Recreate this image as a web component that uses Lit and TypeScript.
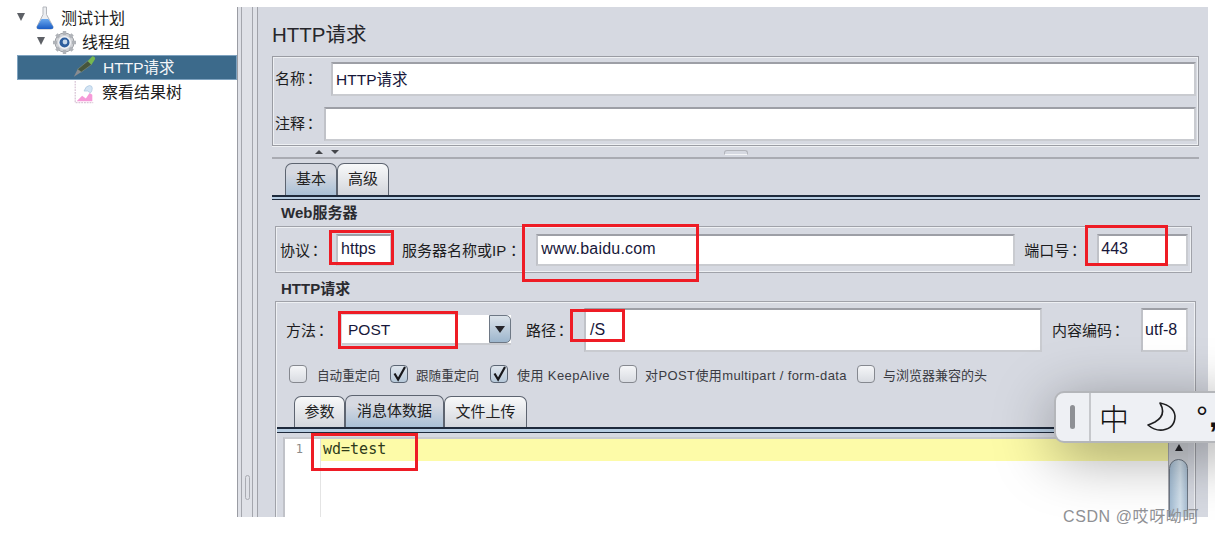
import { LitElement, html, css, svg } from "lit";
import { customElement } from "lit/decorators.js";

const flask = svg`<svg width="20" height="24" viewBox="0 0 20 24"><defs><linearGradient id="fl" x1="0" y1="0" x2="0" y2="1"><stop offset="0" stop-color="#6aa8ee"/><stop offset="1" stop-color="#1a5cc4"/></linearGradient></defs><path d="M8 1h3.5v7.5l6.5 12q.8 2.5-2 2.500H4q-2.800 0-2-2.500l6-12z" fill="#eceef1" stroke="#b4b7bd"/><path d="M6.500 13h6.800l4.700 7.500q.8 2.500-2 2.500H4q-2.800 0-2-2.500z" fill="url(#fl)"/></svg>`;
const gear = svg`<svg width="25" height="25" viewBox="0 0 25 25"><circle cx="12.500" cy="12.500" r="9.500" fill="#d0d2d6" stroke="#9a9da2" stroke-width="1"/><path d="M12.500 1v4M12.500 20v4M1 12.500h4M20 12.500h4M4.400 4.400l2.800 2.800M17.800 17.800l2.800 2.800M20.600 4.400l-2.800 2.800M7.200 17.800l-2.800 2.800" stroke="#b0b3b8" stroke-width="3.400"/><circle cx="12.500" cy="12.500" r="6.500" fill="#f3f4f6"/><circle cx="12.500" cy="12.500" r="5" fill="#2f5f9e"/><circle cx="13" cy="12" r="2.400" fill="#c7d8ea"/></svg>`;
const dropper = svg`<svg width="24" height="23" viewBox="0 0 26 24"><path d="M1 23l4-8 4 3z" fill="#8a8c90"/><path d="M5 15L16 6l4 4L9 18z" fill="#46553c" stroke="#8a947f" stroke-width=".6"/><path d="M16 6l5-5q3 0 3 3l-4 6z" fill="#76b850"/></svg>`;
const chart = svg`<svg width="22" height="24" viewBox="0 0 22 26"><path d="M1.500 1v23.500H21" fill="none" stroke="#d9c6d6" stroke-width="1.400" stroke-dasharray="2 1"/><path d="M3 23l6-6 4 3 4-6 3 2v7z" fill="#f59ad8"/><path d="M11 12q2-6 6-6 3 0 3 3t-2 5l-3-2z" fill="#d3e4f4" stroke="#9dbbd7" stroke-width=".6"/></svg>`;
const check = svg`<svg width="18" height="18" viewBox="0 0 18 18"><path d="M4.500 8.500l3.600 6L15 2" fill="none" stroke="#17171b" stroke-width="2.200"/></svg>`;
const moon = svg`<svg width="30" height="32" viewBox="0 0 30 32"><path d="M13 2Q20 14 8 21Q4 23 1 24Q8 30 16 29Q28 27 28 15Q27 5 13 2z" fill="none" stroke="#1d1d1f" stroke-width="1.600" stroke-linejoin="round"/></svg>`;
const colon = html`<span class="c">：</span>`;

@customElement("app-root")
export class AppRoot extends LitElement {
  static styles = css`
    :host { display: block; width: 1215px; height: 535px; position: relative; overflow: hidden; background: #fff; font-family: "Liberation Sans", "Noto Sans CJK SC", sans-serif; color: #1c1c20; }
    .page { display: flex; height: 517px; }
    .tree { width: 237px; padding-top: 5px; box-sizing: border-box; font-size: 16px; flex: none; }
    .node { height: 25px; padding-bottom: 2px; display: flex; align-items: center; box-sizing: border-box; }
    .node svg { flex: none; margin-top: 2px; }
    .tw { width: 0; height: 0; border-left: 4px solid transparent; border-right: 4px solid transparent; border-top: 8px solid #5d6066; }
    .n1 { padding-left: 17px; }
    .n1 .tw { margin-right: 10px; }
    .n1 span { margin-left: 6px; }
    .n2 { padding-left: 37px; padding-bottom: 3px; }
    .n2 .tw { margin-right: 7px; }
    .n2 span { margin-left: 5px; }
    .n3 { margin-left: 17px; padding-left: 56px; padding-bottom: 4px; }
    .n3 span { margin-left: 6px; }
    .n4 { padding-bottom: 3px; }
    .n4 span { margin-left: 7px; }
    .sel { background: #3c6a8b; color: #f4f6f9; font-size: 15.5px; outline: 1px solid #7fa3c0; outline-offset: -1px; }
    .split { width: 21px; flex: none; margin-top: 7px; box-sizing: border-box; background: #dfe1e7; border-left: 1px solid #9a9ca3; border-right: 1px solid #a0a2a9; position: relative; display: flex; flex-direction: column; justify-content: flex-end; padding: 0 0 17px 7px; }
    .split::before { content: ""; position: absolute; left: 3px; top: 0; bottom: 0; width: 1px; background: #a4a6ad; }
    .split::after { content: ""; position: absolute; left: 14px; top: 0; bottom: 0; width: 1px; background: #a4a6ad; }
    .grip { width: 5px; height: 25px; border: 1px solid #a9abb2; border-radius: 3px; box-sizing: border-box; }
    .main { width: 950px; flex: none; margin-top: 7px; background: #d6d9e1; padding: 15px 0 0 14px; box-sizing: border-box; overflow: hidden; display: flex; flex-direction: column; position: relative; }
    h1 { font-weight: 400; font-size: 20.5px; line-height: 26px; margin: 0 0 8px; color: #26262b; }
    .names { width: 927px; height: 90px; flex: none; box-sizing: border-box; border: 1px solid #9a9ca3; outline: 1px solid #eef0f3; outline-offset: -2px; padding: 5px 2px 0 2px; display: flex; flex-direction: column; gap: 11px; }
    .row { display: flex; align-items: center; }
    .row .lbl { padding-bottom: 3px; }
    .lbl { font-size: 15px; white-space: nowrap; flex: none; }
    .c { font-family: "Noto Sans CJK TC", sans-serif; margin: 0 2px 0 -2px; }
    .lserver .c { margin: 0; }
    .f { background: #fff; box-sizing: border-box; border: 2px solid #c9cbd0; border-top-color: #9d9fa6; border-left-color: #c0c2c8; font-size: 16px; display: flex; align-items: center; padding-left: 3px; color: #17173a; white-space: nowrap; overflow: hidden; flex: none; }
    .names .f { height: 34px; padding-bottom: 3px; font-size: 15.5px; }
    .fname { width: 865px; margin-left: 11px; }
    .fcomment { width: 872px; margin-left: 4px; }
    .collapse { width: 927px; height: 13px; flex: none; box-sizing: border-box; border-bottom: 2px solid #a9abb2; border-top: 1px solid #eef0f3; display: flex; align-items: center; padding-left: 43px; gap: 8px; }
    .au, .ad { width: 0; height: 0; border-left: 4px solid transparent; border-right: 4px solid transparent; }
    .au { border-bottom: 4px solid #44464b; }
    .ad { border-top: 4px solid #44464b; }
    .knob { width: 24px; height: 5px; margin-left: 377px; border: 1px solid #b2b4ba; border-bottom-color: #f4f5f7; border-radius: 3px 3px 0 0; box-sizing: border-box; }
    .tabs { display: flex; align-items: flex-end; flex: none; }
    .t { box-sizing: border-box; border: 1px solid #5d6470; border-bottom: none; border-radius: 7px 7px 0 0; background: linear-gradient(#f8f9fa, #d3d6dc); font-size: 15px; padding-bottom: 4px; display: flex; align-items: center; justify-content: center; color: #222; }
    .t.on { background: linear-gradient(#d6d9e1 30%, #a9c0d6); }
    .t1 { margin: 4px 0 0 13px; }
    .t1 .t { width: 52px; height: 32px; padding-bottom: 5px; }
    .bar { width: 928px; height: 5px; flex: none; box-sizing: border-box; border-top: 2px solid #1e2a3c; border-bottom: 1px solid #1e2a3c; background: #b7cde2; }
    .gt { font-weight: 700; font-size: 15px; line-height: 20px; padding-left: 9px; color: #2b2b30; }
    .gweb { margin-top: 3px; }
    .ghttp { margin-top: 6px; }
    .box { box-sizing: border-box; border: 1px solid #a0a2a9; outline: 1px solid #eef0f3; outline-offset: -2px; }
    .web { width: 917px; height: 47px; flex: none; display: flex; align-items: center; padding: 0 3px 0 4px; margin: 3px 0 0 3px; }
    .web .f { height: 32px; padding-bottom: 2px; }
    .fproto { width: 56px; margin-left: 11px; }
    .lserver { margin-left: 10px; }
    .fserver { width: 479px; margin-left: 15px; letter-spacing: .2px; padding-left: 3px; }
    .lport { margin-left: 9px; }
    .fport { width: 91px; margin-left: 13px; padding-left: 2px; }
    .http { margin: 2px 0 0 3px; width: 921px; height: 240px; flex: none; padding: 6px 0 0 10px; display: flex; flex-direction: column; position: relative; }
    .top { display: flex; align-items: flex-start; height: 44px; }
    .top > .lbl { line-height: 44px; }
    .top .f { height: 44px; padding-bottom: 1px; }
    .combo { margin: 7px 0 0 11px; width: 169px; height: 30px; display: flex; flex: none; background: #fff; box-sizing: border-box; border-bottom: 2px solid #c9cbd0; font-size: 15.5px; }
    .combo b { flex: 1; font-weight: 400; padding: 0 0 0 6px; line-height: 29px; color: #17173a; }
    .combo i { width: 22px; box-sizing: border-box; background: linear-gradient(#dce3ea, #9db6cd); border: 1px solid #6e7885; border-radius: 0 5px 5px 0; display: flex; align-items: center; justify-content: center; }
    .combo i::after { content: ""; border-left: 5px solid transparent; border-right: 5px solid transparent; border-top: 7px solid #26262b; }
    .lpath { margin-left: 15px; }
    .fpath { width: 458px; margin-left: 13px; padding-left: 4px; }
    .lenc { margin-left: 10px; }
    .top .fenc { width: 47px; margin-left: 14px; padding-left: 2px; }
    .checks { display: flex; align-items: center; margin: 13px 0 0 3px; height: 18px; font-size: 13px; color: #3a3b42; }
    .cb { width: 18px; height: 18px; flex: none; box-sizing: border-box; border: 1px solid #85888f; border-radius: 4px; background: linear-gradient(#f5f6f8, #d9dce2); display: flex; }
    .cb.on { background: linear-gradient(#dfe5ec, #b7c9da); border-color: #5b6574; }
    .cb svg { margin: -1px; }
    .checks span { white-space: nowrap; flex: none; }
    .k1 { width: 63px; margin: 0 10px; font-size: 12.6px; }
    .k2 { width: 64px; margin: 0 10px 0 8px; font-size: 12.6px; }
    .k3 { width: 93px; margin: 0 9px; letter-spacing: .4px; }
    .k4 { width: 202px; margin: 0 10px 0 8px; letter-spacing: .4px; }
    .k5 { margin-left: 8px; }
    .t2 { margin: 12px 0 0 8px; }
    .t2 .t { height: 31px; }
    .t2 .t.on { height: 32px; }
    .tp { width: 51px; }
    .tb { width: 99px; }
    .tu { width: 83px; }
    .http .bar { width: 917px; margin-left: -10px; height: 6px; }
    .editor { margin: 4px 0 0 -3px; width: 905px; flex: 1; display: flex; background: #fff; border-left: 2px solid #c0c2c8; border-top: 2px solid #c9cbd0; box-sizing: border-box; }
    .gut { width: 36px; flex: none; border-right: 1px solid #e4e4e4; font: 12px "DejaVu Sans Mono", monospace; color: #8a8a8a; text-align: right; padding: 3px 17px 0 0; box-sizing: border-box; }
    .code { flex: 1; height: 22px; background: #fdfba8; font: 15px/21px "DejaVu Sans Mono", "Liberation Mono", monospace; color: #2e3a1a; padding-left: 2px; }
    .sb { width: 20px; flex: none; background: #d3d6dc; border-left: 1px solid #a9abb2; box-sizing: border-box; position: relative; display: flex; flex-direction: column; align-items: center; padding-top: 5px; }
    .sb em { border-left: 4px solid transparent; border-right: 4px solid transparent; border-bottom: 7px solid #26262b; }
    .sb u { position: absolute; left: 0; right: 0; top: 20px; bottom: 0; background: linear-gradient(90deg, #a3bcd3, #d3e1ec 60%, #a9bed2); border: 1px solid #6e7885; border-radius: 13px 13px 0 0; }
    .red { position: absolute; border: 3.5px solid #ee1c25; box-sizing: border-box; pointer-events: none; z-index: 3; }
    .r1 { left: 329px; top: 230px; width: 65px; height: 35px; }
    .r2 { left: 522px; top: 224px; width: 177px; height: 58px; }
    .r3 { left: 1085px; top: 225px; width: 83px; height: 41px; }
    .r4 { left: 338px; top: 311px; width: 120px; height: 38px; }
    .r5 { left: 570px; top: 309px; width: 55px; height: 33px; }
    .r6 { left: 311px; top: 433px; width: 107px; height: 38px; }
    .ime { position: absolute; left: 1054px; top: 391px; width: 190px; height: 52px; box-sizing: border-box; border-radius: 10px; background: #eef0f4; border: 2px solid #b4b6ba; box-shadow: 0 12px 60px rgba(0,0,0,.4); z-index: 5; display: flex; align-items: center; }
    .ime .hd { width: 35px; height: 100%; box-sizing: border-box; border-right: 2px solid #c6c8cc; display: flex; align-items: center; justify-content: center; flex: none; }
    .ime .hd::after { content: ""; width: 5px; height: 24px; border-radius: 3px; background: #8e9095; }
    .ime .zh { font-size: 30px; margin-left: 8px; color: #111; font-family: "Noto Sans CJK SC", sans-serif; font-weight: 300; line-height: 1; }
    .ime svg { margin-left: 18px; flex: none; }
    .ime .deg { font-size: 30px; margin-left: 19px; color: #111; line-height: 1; }
    .ime .cm { font-size: 30px; font-weight: 700; margin-left: 1px; color: #111; line-height: 1; }
    .wm { position: absolute; left: 1063px; top: 507px; font-size: 16px; line-height: 20px; letter-spacing: .6px; color: #8f9094; z-index: 6; white-space: nowrap; }
  `;

  render() {
    return html`
      <div class="page">
        <div class="tree">
          <div class="node n1"><i class="tw"></i>${flask}<span>测试计划</span></div>
          <div class="node n2"><i class="tw"></i>${gear}<span>线程组</span></div>
          <div class="node n3 sel">${dropper}<span>HTTP请求</span></div>
          <div class="node n3 n4">${chart}<span>察看结果树</span></div>
        </div>
        <div class="split"><div class="grip"></div></div>
        <div class="main">
          <h1>HTTP请求</h1>
          <div class="names">
            <div class="row"><span class="lbl">名称${colon}</span><div class="f fname">HTTP请求</div></div>
            <div class="row"><span class="lbl">注释${colon}</span><div class="f fcomment"></div></div>
          </div>
          <div class="collapse"><i class="au"></i><i class="ad"></i><i class="knob"></i></div>
          <div class="tabs t1"><div class="t on">基本</div><div class="t">高级</div></div>
          <div class="bar"></div>
          <div class="gt gweb">Web服务器</div>
          <div class="box web">
            <span class="lbl">协议${colon}</span><div class="f fproto">https</div>
            <span class="lbl lserver">服务器名称或IP${colon}</span><div class="f fserver">www.baidu.com</div>
            <span class="lbl lport">端口号${colon}</span><div class="f fport">443</div>
          </div>
          <div class="gt ghttp">HTTP请求</div>
          <div class="box http">
            <div class="top">
              <span class="lbl">方法${colon}</span>
              <div class="combo"><b>POST</b><i></i></div>
              <span class="lbl lpath">路径${colon}</span><div class="f fpath">/S</div>
              <span class="lbl lenc">内容编码${colon}</span><div class="f fenc">utf-8</div>
            </div>
            <div class="checks">
              <i class="cb"></i><span class="k1">自动重定向</span>
              <i class="cb on">${check}</i><span class="k2">跟随重定向</span>
              <i class="cb on">${check}</i><span class="k3">使用 KeepAlive</span>
              <i class="cb"></i><span class="k4">对POST使用multipart / form-data</span>
              <i class="cb"></i><span class="k5">与浏览器兼容的头</span>
            </div>
            <div class="tabs t2">
              <div class="t tp">参数</div>
              <div class="t on tb">消息体数据</div>
              <div class="t tu">文件上传</div>
            </div>
            <div class="bar"></div>
            <div class="editor">
              <div class="gut">1</div>
              <div class="code">wd=test</div>
              <div class="sb"><em></em><u></u></div>
            </div>
          </div>
        </div>
      </div>
      <div class="red r1"></div>
      <div class="red r2"></div>
      <div class="red r3"></div>
      <div class="red r4"></div>
      <div class="red r5"></div>
      <div class="red r6"></div>
      <div class="ime"><div class="hd"></div><span class="zh">中</span>${moon}<span class="deg">°</span><span class="cm">,</span></div>
      <div class="wm">CSDN @哎呀呦呵</div>
    `;
  }
}
